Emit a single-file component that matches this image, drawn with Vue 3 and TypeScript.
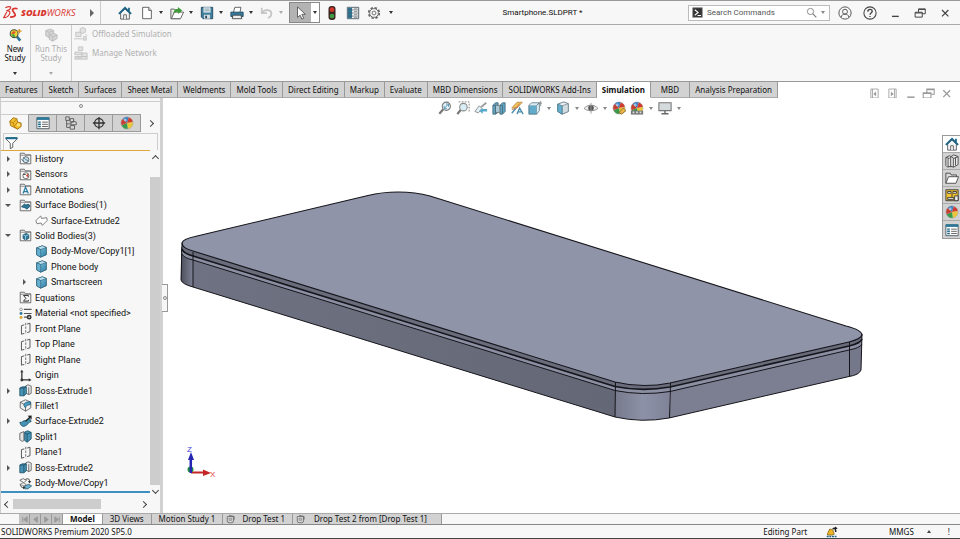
<script setup lang="ts">
import { ref } from 'vue'

interface Tool {
  icon: string
  label: string
  menu?: boolean
  off?: boolean
}

interface TreeNode {
  label: string
  icon: string
  level: number
  arrow?: 'closed' | 'open'
}

const fileTools: Tool[] = [
  { icon: 'page', label: 'New', menu: true },
  { icon: 'open', label: 'Open', menu: true },
  { icon: 'save', label: 'Save', menu: true },
  { icon: 'print', label: 'Print', menu: true },
  { icon: 'undo', label: 'Undo', menu: true, off: true },
]

const tabs = [
  'Features', 'Sketch', 'Surfaces', 'Sheet Metal', 'Weldments', 'Mold Tools', 'Direct Editing', 'Markup',
  'Evaluate', 'MBD Dimensions', 'SOLIDWORKS Add-Ins', 'Simulation', 'MBD', 'Analysis Preparation',
]
const activeTab = ref('Simulation')

const panelTabs: Tool[] = [
  { icon: 'part', label: 'Feature tree' },
  { icon: 'props', label: 'Properties' },
  { icon: 'config', label: 'Configurations' },
  { icon: 'target', label: 'Dimensions' },
  { icon: 'ball', label: 'Display' },
]
const activePanel = ref('part')

const tree: TreeNode[] = [
  { label: 'History', icon: 'f-history', level: 0, arrow: 'closed' },
  { label: 'Sensors', icon: 'f-sensor', level: 0, arrow: 'closed' },
  { label: 'Annotations', icon: 'f-note', level: 0, arrow: 'closed' },
  { label: 'Surface Bodies(1)', icon: 'f-surface', level: 0, arrow: 'open' },
  { label: 'Surface-Extrude2', icon: 'surface', level: 1 },
  { label: 'Solid Bodies(3)', icon: 'f-solid', level: 0, arrow: 'open' },
  { label: 'Body-Move/Copy1[1]', icon: 'cube', level: 1 },
  { label: 'Phone body', icon: 'cube', level: 1 },
  { label: 'Smartscreen', icon: 'cube', level: 1, arrow: 'closed' },
  { label: 'Equations', icon: 'f-sigma', level: 0 },
  { label: 'Material <not specified>', icon: 'material', level: 0 },
  { label: 'Front Plane', icon: 'plane', level: 0 },
  { label: 'Top Plane', icon: 'plane', level: 0 },
  { label: 'Right Plane', icon: 'plane', level: 0 },
  { label: 'Origin', icon: 'origin', level: 0 },
  { label: 'Boss-Extrude1', icon: 'boss', level: 0, arrow: 'closed' },
  { label: 'Fillet1', icon: 'fillet', level: 0 },
  { label: 'Surface-Extrude2', icon: 'sweep', level: 0, arrow: 'closed' },
  { label: 'Split1', icon: 'split', level: 0 },
  { label: 'Plane1', icon: 'plane', level: 0 },
  { label: 'Boss-Extrude2', icon: 'boss', level: 0, arrow: 'closed' },
  { label: 'Body-Move/Copy1', icon: 'move', level: 0 },
]

const viewTools: Tool[] = [
  { icon: 'zoomfit', label: 'Zoom to fit' },
  { icon: 'zoomarea', label: 'Zoom to area' },
  { icon: 'prev', label: 'Previous view' },
  { icon: 'section', label: 'Section view' },
  { icon: 'dynamic', label: 'Dynamic annotation views' },
  { icon: 'orient', label: 'View orientation', menu: true },
  { icon: 'style', label: 'Display style', menu: true },
  { icon: 'eye', label: 'Hide items', menu: true },
  { icon: 'appearance', label: 'Edit appearance' },
  { icon: 'scene', label: 'Apply scene', menu: true },
  { icon: 'monitor', label: 'View settings', menu: true },
]

const docTools: Tool[] = [
  { icon: 'dockleft', label: 'Dock left' },
  { icon: 'dockright', label: 'Dock right' },
  { icon: 'min', label: 'Minimize document' },
  { icon: 'restore', label: 'Restore document' },
  { icon: 'close', label: 'Close document' },
]

const taskTabs: Tool[] = [
  { icon: 'home', label: 'Resources' },
  { icon: 'library', label: 'Design library' },
  { icon: 'folder', label: 'File explorer' },
  { icon: 'palette', label: 'View palette' },
  { icon: 'ball', label: 'Appearances' },
  { icon: 'props', label: 'Custom properties' },
]

const studies = [
  { label: 'Model', test: false },
  { label: '3D Views', test: false },
  { label: 'Motion Study 1', test: false },
  { label: 'Drop Test 1', test: true },
  { label: 'Drop Test 2 from [Drop Test 1]', test: true },
]
const activeStudy = ref('Model')
const navs = ['first', 'previous', 'next', 'last']
const query = ref('')
const filter = ref('')
</script>

<template>
  <div class="app">
    <svg class="sprite" aria-hidden="true">
      <defs>
        <linearGradient id="g-blue" x1="0" y1="0" x2="1" y2="1">
          <stop offset="0" stop-color="#8fd0ea" /><stop offset="1" stop-color="#2b7ea6" />
        </linearGradient>
        <symbol id="home" viewBox="0 0 16 16"><path d="M3 8v7h10V8L8 3.500z" fill="#f1f3f4" stroke="#555" /><path d="M6.500 15v-5h3v5" fill="#fff" stroke="#555" /><path d="M11.500 2h2v4h-2z" fill="#1d6686" /><path d="M1 9l7-7 7 7" fill="none" stroke="#1d6686" stroke-width="2.200" /></symbol>
        <symbol id="page" viewBox="0 0 16 16"><path d="M3 1.500h7L13 5v9.500H3z" fill="#fff" stroke="#555" /><path d="M10 1.500V5h3" fill="#ddd" stroke="#555" /></symbol>
        <symbol id="open" viewBox="0 0 16 16"><path d="M1 3.500h4l1 1h5.500V7M1 3.500v11h10.500" fill="#e9e9e9" stroke="#555" /><path d="M1.500 14.500L5 7h10.500l-3.500 7.500z" fill="#fff" stroke="#555" /><path d="M4 9c0-4 2-5.500 5-5.500V1l5 4-5 4V6.500C7 6.500 5.500 7 4 9z" fill="#3d9a35" /></symbol>
        <symbol id="save" viewBox="0 0 16 16"><path d="M1.500 1.500h13v13h-11l-2-2z" fill="#3f7f9d" stroke="#20475b" /><path d="M4 1.500h8v6H4z" fill="#e8f0f4" /><path d="M5 3.500h6M5 5.500h6" stroke="#7c97a4" /><path d="M4.500 10h7v4.500h-7z" fill="#d7dde0" /><path d="M6 11h2v3H6z" fill="#20475b" /></symbol>
        <symbol id="print" viewBox="0 0 16 16"><path d="M4 7l1.500-5.500h7L11.500 7" fill="#fff" stroke="#555" /><path d="M1 7h14v5H1z" fill="#347b9b" stroke="#20475b" /><path d="M3.500 10.500h9l1 4h-11z" fill="#eee" stroke="#444" /></symbol>
        <symbol id="undo" viewBox="0 0 16 16"><path d="M2 2v6h6M2.500 7.500C6 3 13 4 13 8.500c0 3-2 4.500-4 5" fill="none" stroke="#c6c6c6" stroke-width="2" /></symbol>
        <symbol id="cursor" viewBox="0 0 16 16"><path d="M4 1v12l3-2.500 2 4.500 2-1-2-4.500h4z" fill="#fff" stroke="#555" /></symbol>
        <symbol id="traffic" viewBox="0 0 16 16"><rect x="4" y="0" width="8" height="16" rx="3.500" fill="#3b2420" /><circle cx="8" cy="4.200" r="2.700" fill="#d2372c" /><circle cx="8" cy="11.500" r="2.700" fill="#3f9c46" /></symbol>
        <symbol id="list" viewBox="0 0 16 16"><path d="M1.500 1.500h13v13h-13z" fill="#fff" stroke="#45545c" /><path d="M2 2h5v12H2z" fill="#2d7899" /><path d="M2 4.500h12M2 8h12M2 11.500h12" stroke="#45545c" stroke-width=".8" /><path d="M9 3.200h4M9 6.200h4M9 9.800h4M9 13h4" stroke="#888" /></symbol>
        <symbol id="gear" viewBox="0 0 16 16"><circle cx="8" cy="8" r="6" fill="none" stroke="#666" stroke-width="2" stroke-dasharray="2.800 1.900" /><circle cx="8" cy="8" r="5" fill="#f7f7f7" stroke="#666" /><circle cx="8" cy="8" r="2.200" fill="none" stroke="#666" /></symbol>
        <symbol id="terminal" viewBox="0 0 16 16"><path d="M1 1h14v14H1z" fill="#333" stroke="#888" /><path d="M4 4l5 4-5 4M8 12.500h5" stroke="#fff" stroke-width="1.500" fill="none" /></symbol>
        <symbol id="search" viewBox="0 0 16 16"><circle cx="6.500" cy="6.500" r="4.500" fill="none" stroke="#777" stroke-width="1.200" /><path d="M10 10l5 5" stroke="#777" stroke-width="1.600" /></symbol>
        <symbol id="user" viewBox="0 0 16 16"><g fill="none" stroke="#555" stroke-width="1.100"><circle cx="8" cy="8" r="7" /><circle cx="8" cy="6.500" r="2.800" /><path d="M3.500 13c.5-3 2.500-3.700 4.500-3.700s4 .7 4.500 3.700" /></g></symbol>
        <symbol id="help" viewBox="0 0 16 16"><g fill="none" stroke="#444" stroke-width="1.200"><circle cx="8" cy="8" r="7" /><path d="M5.500 6.500C5.500 3 10.500 3 10.500 6c0 2-2.500 2-2.500 4M8 11.300v1.400" stroke-width="1.500" /></g></symbol>
        <symbol id="min" viewBox="0 0 16 16"><path d="M4 12.500h9" stroke="currentColor" stroke-width="1.800" /></symbol>
        <symbol id="restore" viewBox="0 0 16 16"><path d="M6 7V2.500h9V9h-4M1.500 7H11v6.500H1.500zM1.500 8H11M6 3.300h9" fill="none" stroke="currentColor" stroke-width="1.300" /></symbol>
        <symbol id="close" viewBox="0 0 16 16"><path d="M4 4l8.500 8.500M12.500 4L4 12.500" stroke="currentColor" stroke-width="1.600" /></symbol>
        <symbol id="dockleft" viewBox="0 0 16 16"><path d="M3.500 2.500h9v11h-9zM5.500 2.500v11" fill="none" stroke="currentColor" stroke-width="1" /><path d="M10 5.500v6L6.500 8.500z" fill="currentColor" /></symbol>
        <symbol id="dockright" viewBox="0 0 16 16"><path d="M3.500 2.500h9v11h-9zM10.500 2.500v11" fill="none" stroke="currentColor" stroke-width="1" /><path d="M6 5.500v6l3.500-3z" fill="currentColor" /></symbol>
        <symbol id="newstudy" viewBox="0 0 16 16"><path d="M9.500 9l4.500 5.500" stroke="#2e7299" stroke-width="3" /><circle cx="7" cy="6.500" r="4.500" fill="#e8d838" stroke="#454a42" stroke-width="1.200" /><path d="M4 6.500a3 3 0 0 1 5-2L7 7z" fill="#e25a2a" /><path d="M4 7l3 0 1.500 3A3 3 0 0 1 4 7z" fill="#45a547" /><path d="M13 1v5M10.500 3.500h5" stroke="#d69023" stroke-width="1.500" /></symbol>
        <symbol id="run" viewBox="0 0 16 16"><g fill="#d4d4d4" stroke="#bcbcbc"><path d="M2 3l5-2 4 2v6l-5 2-4-2z" /><path d="M2 3l4 2v6M6 5l5-2" fill="none" /><path d="M6 8l5-2 4 2v4l-5 3-4-2z" /><path d="M6 8l4 2v5M10 10l5-2" fill="none" /></g></symbol>
        <symbol id="offload" viewBox="0 0 16 16"><g fill="#e2e2e2" stroke="#c2c2c2"><path d="M2 6h6v5H2zM7 2l3-1.500L13 2v4l-3 1.500L7 6z" /><path d="M0 13.500h10M11 11h3v4h-3z" /><path d="M13 8l2 2" /></g></symbol>
        <symbol id="network" viewBox="0 0 16 16"><g fill="#e2e2e2" stroke="#c2c2c2"><path d="M5 1h5v4H5zM1 7h8v3H1zM1 12h14v3H1zM9 8h6v4H9z" /><path d="M3 13.500h6" /></g></symbol>
        <symbol id="part" viewBox="0 0 16 16"><path d="M2 6l4-4 4 1 1 4 4 1v4l-4 3-8-4z" fill="#f2bd2f" stroke="#9b6f10" /><path d="M2 6l4 2 4-5M6 8l1 4 4-5M7 12l4 3" fill="none" stroke="#b9830f" /><circle cx="12" cy="10" r="1.800" fill="#ffe27b" /></symbol>
        <symbol id="props" viewBox="0 0 16 16"><path d="M1 2h14v12.500H1z" fill="#fff" stroke="#45545c" /><path d="M1 1.500h14v3H1z" fill="#2d7899" /><path d="M2.500 7h3M2.500 9.500h3M2.500 12h3" stroke="#1d6686" stroke-width="1.700" /><path d="M7 7h6.500M7 9.500h6.500M7 12h6.500" stroke="#555" /></symbol>
        <symbol id="config" viewBox="0 0 16 16"><path d="M3 2v11h4M3 4.500h4M3 9h5" fill="none" stroke="#555" /><path d="M2 1h4v4H2zM7 3h4v4H7zM8 7l3-1 3 1v3H8zM7 11h5v4H7z" fill="#d9d9d9" stroke="#555" /></symbol>
        <symbol id="target" viewBox="0 0 16 16"><circle cx="8" cy="8" r="5" fill="none" stroke="#333" stroke-width="1.500" /><path d="M8 1v14M1 8h14" stroke="#333" stroke-width="1.500" /></symbol>
        <symbol id="ball" viewBox="0 0 16 16"><circle cx="8" cy="8" r="6.800" fill="#eee" stroke="#777" stroke-width=".6" /><path d="M8 8L3 3.500A6.600 6.600 0 0 1 10 1.700z" fill="#3d7fc0" /><path d="M8 8l2-6.300A6.600 6.600 0 0 1 14.500 7z" fill="#d23a2e" /><path d="M8 8l6.500-1A6.600 6.600 0 0 1 9 14.600z" fill="#e9c63a" /><path d="M8 8l1 6.600A6.600 6.600 0 0 1 2 10.500z" fill="#3a9a4c" /><path d="M8 8l-6 2.500A6.600 6.600 0 0 1 3 3.500z" fill="#c54134" /><circle cx="6" cy="4.500" r="1.600" fill="#fff" opacity=".5" /></symbol>
        <symbol id="filter" viewBox="0 0 16 16"><path d="M1 2h14v1.500L9.500 9v5l-3 1.500V9L1 3.500z" fill="#fff" stroke="#444" /><path d="M1 1.500h14v2.500H1z" fill="#1d6f92" /></symbol>
        <symbol id="fold" viewBox="0 0 16 16"><path d="M1.500 14.500v-13h5l1.500 2h6.500v11z" fill="#f4f4f4" stroke="#555" /><path d="M1.500 4h13" stroke="#777" /></symbol>
        <symbol id="f-history" viewBox="0 0 16 16"><use href="#fold" /><circle cx="8.500" cy="9.500" r="3.700" fill="#cfe2ea" stroke="#45545c" /><path d="M6 7l2.500 2.500 2.500 1M3 9l2 2" stroke="#2d6d8c" fill="none" /></symbol>
        <symbol id="f-sensor" viewBox="0 0 16 16"><use href="#fold" /><circle cx="8.500" cy="9.500" r="3.700" fill="#fff" stroke="#555" /><path d="M8.500 9.500l2.800-2.800v5z" fill="#cf3d2d" /><path d="M5 8h3.500" stroke="#333" /></symbol>
        <symbol id="f-note" viewBox="0 0 16 16"><use href="#fold" /><path d="M5 13l3-8 3.500 8M6 10.500h4.500" fill="none" stroke="#267ca2" stroke-width="1.500" /></symbol>
        <symbol id="f-surface" viewBox="0 0 16 16"><use href="#fold" /><path d="M3 9.500L7 6l1 1.500 4-1 1.500 2.500-4 3.500-1.500-1.500z" fill="#2d7899" stroke="#1c4f68" /></symbol>
        <symbol id="f-solid" viewBox="0 0 16 16"><use href="#fold" /><path d="M5 7l4-1.500L12 7v4.500l-4 2-3-2z" fill="#2d7899" stroke="#1c4f68" /><path d="M5 7l3 1.500L12 7M8 8.500v5" stroke="#a2d3e8" fill="none" /></symbol>
        <symbol id="f-sigma" viewBox="0 0 16 16"><use href="#fold" /><path d="M11.500 7V5.500H5.500L8.500 9l-3 3.500h6V11" fill="none" stroke="#333" stroke-width="1.200" /></symbol>
        <symbol id="surface" viewBox="0 0 16 16"><path d="M1 8l6-5.500 1 3 6.500-1L15 8l-6 6-1.500-3-5 1z" fill="#fff" stroke="#666" /></symbol>
        <symbol id="cube" viewBox="0 0 16 16"><path d="M2 3.500L9 1l5 2v9l-7 3-5-3z" fill="url(#g-blue)" stroke="#2b5a70" /><path d="M2 3.500l5 2L14 3 9 1z" fill="#b9e2f1" stroke="#2b5a70" stroke-width=".7" /><path d="M2 3.500l5 2V15l-5-3z" fill="#65afd0" stroke="#2b5a70" stroke-width=".7" /></symbol>
        <symbol id="style" viewBox="0 0 16 16"><path d="M2 3.500L9 1l5 2v9l-7 3-5-3z" fill="#e9eef0" stroke="#5f7680" /><path d="M7 5.500L14 3v9l-7 3z" fill="#d3dce0" stroke="#5f7680" stroke-width=".7" /><path d="M2 3.500l5 2V15l-5-3z" fill="#65afd0" stroke="#3f6f86" stroke-width=".7" /></symbol>
        <symbol id="material" viewBox="0 0 16 16"><circle cx="2.500" cy="3" r="1.600" fill="#fff" stroke="#888" /><circle cx="2.500" cy="8" r="1.800" fill="#2d7899" /><circle cx="2.500" cy="13" r="1.800" fill="#d9a52c" /><path d="M6 3h9.500M6 8h9.500M6 12.500h4" stroke="#555" stroke-width="1.500" /><circle cx="12.500" cy="12.500" r="2" fill="none" stroke="#333" stroke-width="2" /></symbol>
        <symbol id="plane" viewBox="0 0 16 16"><path d="M6.500 3.500L3 4.500V15l3.500-1M10 2.500L13.500 1.500v10.500L10 13" fill="none" stroke="#555" stroke-width="1.200" /><path d="M8.300 1v14" stroke="#555" stroke-dasharray="3 1.500" /></symbol>
        <symbol id="origin" viewBox="0 0 16 16"><path d="M3.500 3v10.500H13" fill="none" stroke="#333" stroke-width="1.600" /><path d="M1.500 4l2-3 2 3zM12 11.500l3.500 2-3.500 2z" fill="#333" /><circle cx="3.500" cy="13.500" r="1.800" fill="#333" /></symbol>
        <symbol id="boss" viewBox="0 0 16 16"><path d="M8 2.500l3-1.500 4 1.500v9L12 13l-4-2z" fill="#eee" stroke="#555" /><path d="M12 4v9" stroke="#555" /><path d="M1 5l3-1.500h5V12l-3 2.500H1z" fill="#4793b5" stroke="#1c4f68" /><path d="M1 5h5v9.500M6 5l3-1.500" fill="none" stroke="#1c4f68" /></symbol>
        <symbol id="fillet" viewBox="0 0 16 16"><path d="M1.500 4L8 1l6.500 3v7L8 15l-6.500-4z" fill="#f0f0f0" stroke="#555" /><path d="M6 8c0-3 2-4.500 8-4.500V7c-3 0-6 1-6 4z" fill="#4ea0c4" stroke="#1c5a78" /><path d="M1.500 4L6 6.500M8 11v4" fill="none" stroke="#555" /></symbol>
        <symbol id="sweep" viewBox="0 0 16 16"><path d="M1 9c3 1 4-3 7-2l5-3 2 4c-3 0-4 5-9 6-3 0-4-2-5-5z" fill="#4793b5" stroke="#1c4f68" /><path d="M8 8l6-6" stroke="#222" stroke-width="1.500" /><path d="M15.500.500v5L10.500 1z" fill="#222" /></symbol>
        <symbol id="split" viewBox="0 0 16 16"><path d="M1 4l5-2v11l-2 1-3-2z" fill="#e4e4e4" stroke="#555" /><path d="M7 2.500L11 1l4 2v8l-5 4-3-2z" fill="#4793b5" stroke="#1c4f68" /><path d="M10 5v10M7 3.500l3 1.500 5-2" fill="none" stroke="#1c4f68" /></symbol>
        <symbol id="move" viewBox="0 0 16 16"><path d="M1 4l4-2 4 2-3 3z" fill="#fff" stroke="#555" /><path d="M7 11l5-2 3.500 2L11 14.500H7z" fill="#6db4d3" stroke="#2b5a70" /><path d="M8 3c4-2 5 0 5 3M2 9c0 4 2 4 4 4" fill="none" stroke="#333" stroke-width="1.200" /><path d="M11 5h4l-2 3zM5 11v4l3-2z" fill="#333" /><path d="M1 9l4-2 4 2-3 2z" fill="#eee" stroke="#555" stroke-width=".7" /></symbol>
        <symbol id="zoomfit" viewBox="0 0 16 16"><path d="M6 9.500L1.500 14.500" stroke="#777" stroke-width="2.500" /><circle cx="9.500" cy="6" r="4.700" fill="#e4f3f9" stroke="#777" stroke-width="1.200" /><path d="M7.500 8l4-4M9 3.500h3v3M7 5.500v3h3" fill="none" stroke="#4b8cab" /></symbol>
        <symbol id="zoomarea" viewBox="0 0 16 16"><path d="M3 1h12v11" fill="none" stroke="#777" stroke-dasharray="2 1.500" /><path d="M5.500 10L1.500 15" stroke="#777" stroke-width="2.500" /><circle cx="8.500" cy="7" r="4.300" fill="#d9eef6" stroke="#888" stroke-width="1.200" /></symbol>
        <symbol id="prev" viewBox="0 0 16 16"><path d="M8 7l6-5" stroke="#999" stroke-width="2" /><path d="M6 5.500l3 3-4 5-4-1.500z" fill="#e4f3f9" stroke="#888" /><path d="M15 9v3h-5v2.500L6 11.500 10 8v1z" fill="#5aa9cc" /></symbol>
        <symbol id="section" viewBox="0 0 16 16"><path d="M1 5l3-3h3v11l-3 2H1zM9 5l3-3h3v10l-3 3H9z" fill="#5ba3c2" stroke="#4f6e7c" /><path d="M4 5h5v8H4z" fill="#a9c9d7" stroke="#777" /><path d="M1 5h3v10M9 5h3v10" fill="none" stroke="#4f6e7c" /></symbol>
        <symbol id="dynamic" viewBox="0 0 16 16"><path d="M2 8l6-6.500h6L8 8z" fill="#f2c25a" stroke="#b98c45" /><path d="M2 14l5-6M8 15l3-7 4 7M9 12.500h5" fill="none" stroke="#4b8cab" stroke-width="1.500" /><path d="M2 10l5-2 4-5" stroke="#c8704a" fill="none" /></symbol>
        <symbol id="orient" viewBox="0 0 16 16"><path d="M1 5h9v10H1z" fill="#63abca" stroke="#4a7386" /><path d="M1 5l3-3h9l-3 3M10 5l3-3v9l-3 4" fill="#dceef5" stroke="#6b828d" /><path d="M14.500 0v6M12 2.500h4" stroke="#888" /></symbol>
        <symbol id="eye" viewBox="0 0 16 16"><path d="M0 8.500C4 3.500 12 3.500 16 8.500 12 12 4 12 0 8.500z" fill="#eee" stroke="#888" /><circle cx="8" cy="8" r="3.200" fill="#555" /><path d="M8 2v12.500" stroke="#999" /></symbol>
        <symbol id="appearance" viewBox="0 0 16 16"><use href="#ball" /><path d="M8 13l5-5 3 3-5 4z" fill="#e8b64a" stroke="#8b6522" /></symbol>
        <symbol id="scene" viewBox="0 0 16 16"><use href="#ball" /><path d="M1 11h14v4.500H1z" fill="#777" /><path d="M3 12h2v2H3zM7 12h2v2H7zM11 12h2v2h-2z" fill="#ddd" /></symbol>
        <symbol id="monitor" viewBox="0 0 16 16"><path d="M1 2h14v9H1z" fill="#d5dadd" stroke="#777" stroke-width="1.200" /><path d="M8 11v3M4 14.500h8" stroke="#666" stroke-width="1.600" /></symbol>
        <symbol id="library" viewBox="0 0 16 16"><path d="M1 4l4-2 2 1 3-2 5 2v9l-5 3-4-1-3 1-2-2z" fill="#e7e7e7" stroke="#444" /><path d="M3.500 5v10M6.500 4v11M9.500 5v10M12 4v9M1 4l4 1 2-2 3 2 5-2" fill="none" stroke="#444" /></symbol>
        <symbol id="folder" viewBox="0 0 16 16"><path d="M1 14V2.500h5l1 2h6V7" fill="#ddd" stroke="#444" /><path d="M1 14l3-7.500h11.500L12.500 14z" fill="#fff" stroke="#444" /></symbol>
        <symbol id="palette" viewBox="0 0 16 16"><path d="M1 2h14v12.500H1z" fill="#f2c430" stroke="#333" /><path d="M3 4h4v2H3zM9 4h4v2H9zM8 6v5M3 11h7v2H3z" fill="#fff" stroke="#333" /><path d="M11 9h4v5.500h-4z" fill="#eee" stroke="#333" /></symbol>
        <symbol id="stopwatch" viewBox="0 0 16 16"><path d="M2 4h10v7a3 3 0 0 1-3 3H5a3 3 0 0 1-3-3zM5 2l8 2v5" fill="none" stroke="#666" stroke-width="1.300" /><path d="M5 7h4v3H5z" fill="none" stroke="#777" /></symbol>
        <symbol id="rebuild" viewBox="0 0 16 16"><path d="M2 10l3-6 4 1 2 6-3 1H2z" fill="#edb525" stroke="#815e10" /><path d="M9 4c3-3 4 1 4 4" fill="none" stroke="#222" stroke-width="2" /><path d="M10 4l3-3.500L15.500 4z" fill="#222" /><path d="M1 14h13" stroke="#1d6686" stroke-width="2" stroke-dasharray="2.500 1" /></symbol>
      </defs>
    </svg>

    <header class="titlebar">
      <div class="brand">
        <svg class="mark" viewBox="0 0 16 16" aria-hidden="true"><g fill="none" stroke="#d9352f"><path d="M2.500 3c4-2 6.500-1.500 5.500.5C7.500 4.800 5.500 5.800 3.500 6.300M4.500 6.500C7 6 8 7.500 6.800 9.800 5.500 12 3 13.500.8 13.500L4 7.500" stroke-width="1.200" /><path d="M15.500 4c-4-1-6 .3-5 2.300l2.300 3.400c1 2-1 3.300-5.300 3.300" stroke-width="1.900" /></g></svg>
        <span class="word"><b>SOLID</b>WORKS</span>
      </div>
      <button class="expand" aria-label="Show menu"><i class="tri-right"></i></button>
      <nav class="quick" aria-label="Quick access">
        <button class="tool home" aria-label="Home"><svg><use href="#home" /></svg></button>
        <div v-for="t in fileTools" :key="t.icon" class="split">
          <button class="tool" :aria-label="t.label" :disabled="t.off"><svg><use :href="'#' + t.icon" /></svg></button>
          <button class="caret" :class="{ off: t.off }" :aria-label="t.label + ' options'" :disabled="t.off"></button>
        </div>
        <div class="select">
          <button class="arrow" aria-label="Select"><svg><use href="#cursor" /></svg></button>
          <button class="caret" aria-label="Select options"></button>
        </div>
        <div class="extras">
          <button class="tool" aria-label="Rebuild"><svg><use href="#traffic" /></svg></button>
          <button class="tool" aria-label="File properties"><svg><use href="#list" /></svg></button>
          <button class="tool" aria-label="Options"><svg><use href="#gear" /></svg></button>
        </div>
        <button class="caret" aria-label="More options"></button>
      </nav>
      <h1 class="doc">Smartphone.SLDPRT *</h1>
      <label class="search">
        <svg><use href="#terminal" /></svg>
        <input v-model="query" type="text" placeholder="Search Commands" aria-label="Search Commands" />
        <svg><use href="#search" /></svg>
        <i class="caret faint"></i>
      </label>
      <div class="window">
        <button aria-label="Account"><svg><use href="#user" /></svg></button>
        <button aria-label="Help"><svg><use href="#help" /></svg></button>
        <button aria-label="Minimize"><svg class="small"><use href="#min" /></svg></button>
        <button aria-label="Restore"><svg class="small"><use href="#restore" /></svg></button>
        <button aria-label="Close"><svg class="small"><use href="#close" /></svg></button>
      </div>
    </header>

    <section class="ribbon" aria-label="Simulation commands">
      <button class="big new"><svg><use href="#newstudy" /></svg><span>New Study</span><i class="caret"></i></button>
      <button class="big run" disabled><svg><use href="#run" /></svg><span>Run This Study</span><i class="caret off"></i></button>
      <div class="rows">
        <button disabled><svg><use href="#offload" /></svg>Offloaded Simulation</button>
        <button disabled><svg><use href="#network" /></svg>Manage Network</button>
      </div>
    </section>

    <div class="tabrow">
      <nav class="tabs" aria-label="Command manager">
        <button v-for="t in tabs" :key="t" :class="{ on: t === activeTab, wide: t === 'MBD' }" @click="activeTab = t">{{ t }}</button>
      </nav>
      <div class="docctl">
        <button v-for="d in docTools" :key="d.icon" :aria-label="d.label"><svg><use :href="'#' + d.icon" /></svg></button>
      </div>
    </div>

    <main class="work">
      <aside class="panel">
        <div class="grip"><i></i></div>
        <nav class="ptabs" aria-label="Manager tabs">
          <button v-for="p in panelTabs" :key="p.icon" :class="{ on: p.icon === activePanel }" :aria-label="p.label" @click="activePanel = p.icon">
            <svg><use :href="'#' + p.icon" /></svg>
          </button>
          <button class="more" aria-label="More tabs"><i class="chev right"></i></button>
        </nav>
        <label class="filter"><svg><use href="#filter" /></svg><input v-model="filter" type="text" aria-label="Filter tree" /></label>
        <div class="treebox">
          <ul class="tree">
            <li v-for="(n, i) in tree" :key="i" :class="{ child: n.level === 1 }">
              <span class="twist"><i v-if="n.arrow" :class="n.arrow"></i></span>
              <svg><use :href="'#' + n.icon" /></svg>
              <span>{{ n.label }}</span>
            </li>
          </ul>
          <div class="vbar"><i class="chev up"></i><div class="thumb"></div><i class="chev down"></i></div>
        </div>
        <div class="hbar"><i class="chev left"></i><div class="thumb"></div><i class="chev right"></i></div>
      </aside>

      <section class="view" aria-label="Graphics area">
        <svg class="model" viewBox="163 98 797 415" preserveAspectRatio="xMidYMid meet" role="img" aria-label="Smartphone solid model">
          <defs>
            <linearGradient id="c-left"><stop offset="0" stop-color="#4c4f5c" /><stop offset="1" stop-color="#7d8194" /></linearGradient>
            <linearGradient id="c-front"><stop offset="0" stop-color="#777a8c" /><stop offset=".5" stop-color="#8d91a7" /><stop offset="1" stop-color="#808398" /></linearGradient>
            <linearGradient id="s-left"><stop offset="0" stop-color="#6f7282" /><stop offset="1" stop-color="#646775" /></linearGradient>
          </defs>
          <path d="M181 247V280Q182 284 193 287V252z" fill="url(#c-left)" />
          <path d="M193 252V287L615 417V382z" fill="url(#s-left)" />
          <path d="M615 382V417Q642 423 669 418L670 383z" fill="url(#c-front)" />
          <path d="M670 383L669 418L849 376.500V342z" fill="#7c7f92" />
          <path d="M849 342V376.500Q859 375 861 370L862 334z" fill="#75788b" />
          <path d="M182 249Q183 253 193 256L615 386.500Q642 392 670 387L849 346Q861 343 862 339V344Q860 348 849 350L670 391.500Q642 396 615 390.500L193 260Q184 258 182 254z" fill="#8b8fa2" />
          <path d="M182 243L182 249Q183 253 193 256L615 386.500Q642 392 670 387L849 346Q861 343 862 339V334z" fill="#696c7b" />
          <path d="M193 251Q182 248 182 243Q183 239 195 236.500L368 195.500C386 191 410 190.500 430 196L846 326Q862 330 862 335Q861 339 849 342L670 383Q642 388.500 615 382z" fill="#9094a9" stroke="#15151b" stroke-width="1.100" />
          <g class="edge">
            <path d="M182 249Q183 253 193 256L615 386.500Q642 392 670 387L849 346Q861 343 862 339" stroke-width="1.600" />
            <path d="M182 254Q184 258 193 260L615 390.500Q642 396 670 391.500L849 350Q860 348 862 344" />
            <path d="M182 243L181 280Q182 284 193 287L615 417Q642 423 669 418L849 376.500Q859 375 861 370L862 334" />
            <path d="M193 252V287M615.500 382L615 417M670.500 383L669.500 418M849.500 342V376.500" />
          </g>
          <g class="axis">
            <path d="M191 472.500h14" stroke="#c42525" stroke-width="2" /><path d="M203 469.500l8 3.500-8 3z" fill="#c42525" />
            <circle cx="190.500" cy="469.500" r="3" fill="#1f8f3c" />
            <path d="M190.800 473v-16" stroke="#2525b5" stroke-width="2.500" /><path d="M188 460l3-8 3 8z" fill="#2525b5" />
            <text x="187" y="452" fill="#3c3cd0">Z</text><text x="210" y="477" fill="#e04545">X</text>
          </g>
        </svg>
        <nav class="headsup" aria-label="View toolbar">
          <template v-for="v in viewTools" :key="v.icon">
            <button class="tool" :aria-label="v.label"><svg><use :href="'#' + v.icon" /></svg></button>
            <button v-if="v.menu" class="caret faint" :aria-label="v.label + ' options'"></button>
          </template>
        </nav>
        <nav class="task" aria-label="Task pane">
          <button v-for="(t, i) in taskTabs" :key="t.icon" :class="{ on: i === 0 }" :aria-label="t.label"><svg><use :href="'#' + t.icon" /></svg></button>
        </nav>
        <button class="handle" aria-label="Collapse panel"><i></i></button>
      </section>
    </main>

    <nav class="studies" aria-label="Studies">
      <div class="navs">
        <button v-for="n in navs" :key="n" :aria-label="n" disabled>
          <svg viewBox="0 0 10 10">
            <path v-if="n === 'first'" d="M3 2v6M8 2v6L4 5z" /><path v-if="n === 'previous'" d="M7 2v6L3 5z" />
            <path v-if="n === 'next'" d="M3 2v6l4-3z" /><path v-if="n === 'last'" d="M7 2v6M2 2v6l4-3z" />
          </svg>
        </button>
      </div>
      <button v-for="s in studies" :key="s.label" class="study" :class="{ on: s.label === activeStudy, test: s.test }" @click="activeStudy = s.label">
        <svg v-if="s.test"><use href="#stopwatch" /></svg>{{ s.label }}
      </button>
    </nav>

    <footer class="status">
      <span class="version">SOLIDWORKS Premium 2020 SP5.0</span>
      <span>Editing Part</span>
      <svg><use href="#rebuild" /></svg>
      <button class="units">MMGS<i></i></button>
      <span class="bang">!</span>
    </footer>
  </div>
</template>

<style>
html,
body,
#app {
  height: 100%;
  margin: 0;
}
</style>

<style scoped>
.app {
  display: flex;
  flex-direction: column;
  box-sizing: border-box;
  height: 100%;
  overflow: hidden;
  border-top: 1px solid #999;
  border-bottom: 1px solid #444;
  background: #f7f7f7;
  color: #111;
  font: 8px/12px "Noto Sans", "Open Sans", sans-serif;
}
.app * {
  box-sizing: border-box;
}
.sprite {
  position: absolute;
  width: 0;
  height: 0;
}
button {
  display: flex;
  align-items: center;
  justify-content: center;
  margin: 0;
  padding: 0;
  border: 0;
  background: none;
  color: inherit;
  font: inherit;
  white-space: nowrap;
}
input {
  min-width: 0;
  padding: 0;
  border: 0;
  outline: 0;
  background: none;
  font: inherit;
}
svg {
  flex: none;
  width: 14px;
  height: 14px;
}
.caret {
  display: flex;
  align-items: center;
  justify-content: center;
  flex: none;
  width: 12px;
}
.caret::before {
  content: "";
  border: 2px solid transparent;
  border-top: 3px solid #333;
  border-bottom: 0;
}
.caret.off::before {
  border-top-color: #aaa;
}
.caret.faint::before {
  border-top-color: #888;
}
.chev {
  flex: none;
  width: 5px;
  height: 5px;
  border: solid #444;
  border-width: 1px 1px 0 0;
}
.chev.right { transform: rotate(45deg); }
.chev.left { transform: rotate(-135deg); }
.chev.up { transform: rotate(-45deg); }
.chev.down { transform: rotate(135deg); }

.titlebar {
  display: flex;
  flex: none;
  align-items: center;
  height: 24px;
  border-bottom: 1px solid #aaa;
}
.brand {
  display: flex;
  align-items: center;
  gap: 3px;
  width: 84px;
  padding-left: 3px;
  color: #d9352f;
}
.mark {
  width: 15px;
  height: 15px;
}
.word {
  font: italic 9px/12px "Open Sans", sans-serif;
}
.word b {
  font-weight: 800;
}
.expand {
  align-self: stretch;
  width: 17px;
  border-right: 1px solid #ccc;
}
.tri-right {
  border: 4px solid transparent;
  border-left: 4px solid #666;
  border-right: 0;
}
.quick {
  display: flex;
  align-items: center;
  gap: 2px;
  padding-left: 16px;
}
.tool {
  width: 16px;
  height: 16px;
}
.home {
  margin-right: 4px;
}
.split,
.extras {
  display: flex;
}
.select {
  display: flex;
  height: 21px;
  border: 1px solid #888;
  background: #fff;
}
.select .caret {
  width: 8px;
}
.arrow {
  width: 21px;
  background: #b3b3b3;
}
.extras {
  gap: 5px;
  padding: 0 1px 0 2px;
}
.doc {
  flex: 1;
  margin: 0;
  font: 8px/12px Roboto, "Noto Sans", sans-serif;
  text-align: center;
}
.search {
  display: flex;
  align-items: center;
  width: 142px;
  height: 16px;
  padding-left: 3px;
  border: 1px solid #bbb;
  background: #fff;
  font: 8px/12px Roboto, "Noto Sans", sans-serif;
}
.search svg {
  width: 11px;
  height: 11px;
}
.search input {
  flex: 1;
  padding-left: 4px;
}
.search input::placeholder {
  color: #555;
  opacity: 1;
}
.window {
  display: flex;
  gap: 9px;
  padding: 0 7px;
  color: #444;
}
.window button {
  width: 16px;
}
.window .small {
  width: 12px;
  height: 12px;
}

.ribbon {
  display: flex;
  flex: none;
  height: 56px;
}
.big {
  flex-direction: column;
  justify-content: flex-start;
  border-right: 1px solid #ccc;
  line-height: 9px;
  white-space: normal;
}
.big span {
  flex: none;
  height: 28px;
}
.big.new {
  width: 31px;
  padding: 3px 3px 0;
}
.big.run {
  width: 41px;
  padding: 3px 1px 0;
}
.big svg {
  margin-bottom: 2px;
}
.ribbon button:disabled {
  color: #b0b0b0;
}
.rows {
  display: flex;
  flex-direction: column;
  align-items: flex-start;
  gap: 5px;
  padding: 2px;
}
.rows button {
  gap: 4px;
}

.tabrow {
  display: flex;
  flex: none;
  justify-content: space-between;
  height: 17px;
  border-top: 1px solid #999;
  background: #fff;
}
.tabs {
  display: flex;
}
.tabs button {
  padding: 0 5px;
  border-right: 1px solid #999;
  border-bottom: 1px solid #aaa;
  background: #d2d2d2;
}
.tabs .wide {
  padding: 0 10px;
}
.tabs .on {
  border-bottom-color: #fff;
  background: #fff;
  font-weight: 700;
}
.docctl {
  display: flex;
  gap: 5px;
  padding: 5px 7px 0 0;
  color: #999;
}
.docctl button,
.docctl svg {
  width: 13px;
  height: 13px;
}

.work {
  display: flex;
  flex: 1;
  min-height: 0;
}
.panel {
  display: flex;
  flex: none;
  flex-direction: column;
  width: 163px;
  border-left: 1px solid #ccc;
  border-right: 3px solid #d2d2d2;
}
.grip {
  display: flex;
  flex: none;
  align-items: center;
  justify-content: center;
  height: 13px;
  margin-top: 3px;
  border-top: 1px solid #ccc;
  padding-bottom: 4px;
}
.grip i,
.handle i {
  width: 4px;
  height: 4px;
  border: 1px solid #888;
  border-radius: 50%;
}
.ptabs {
  display: flex;
  flex: none;
  height: 18px;
}
.ptabs button {
  width: 28px;
  border: 1px solid #999;
  border-left: 0;
  background: #d2d2d2;
}
.ptabs .on {
  border-color: #ccc #999 #f7f7f7;
  background: #f7f7f7;
}
.ptabs .more {
  flex: 1;
  border: 0;
  background: none;
}
.filter {
  display: flex;
  flex: none;
  align-items: center;
  height: 17px;
  margin: 1px 2px 0;
  padding-left: 1px;
  border: 1px solid #ccc;
  border-bottom: 0;
}
.filter svg {
  width: 13px;
  height: 13px;
}
.filter input {
  flex: 1;
}
.treebox {
  display: flex;
  flex: 1;
  min-height: 0;
}
.tree {
  display: grid;
  flex: 1;
  grid-auto-rows: 1fr;
  min-width: 0;
  margin: 0 0 5px;
  padding: 0;
  border-top: 1px solid #e0a83c;
  border-bottom: 2px solid #3f8fc0;
  font: 9px/12px Roboto, "Noto Sans", sans-serif;
  list-style: none;
}
.tree li {
  display: flex;
  align-items: center;
  min-height: 0;
  white-space: nowrap;
}
.tree .child {
  padding-left: 16px;
}
.tree svg {
  width: 13px;
  height: 13px;
  margin-right: 3px;
}
.twist {
  display: flex;
  justify-content: center;
  width: 14px;
  margin-right: 4px;
}
.closed {
  border: 3px solid transparent;
  border-left-color: #555;
  border-right: 0;
}
.open {
  border: 3px solid transparent;
  border-top-color: #555;
  border-bottom: 0;
}
.vbar {
  display: flex;
  flex: none;
  flex-direction: column;
  align-items: center;
  width: 10px;
  padding: 6px 0 5px;
}
.vbar .thumb {
  flex: 1;
  width: 100%;
  margin: 16px 0 3px;
  background: #cdcdcd;
}
.hbar {
  display: flex;
  flex: none;
  align-items: center;
  height: 12px;
  margin-bottom: 3px;
  padding: 0 14px 0 4px;
}
.hbar .thumb {
  width: 88px;
  height: 10px;
  margin: 0 auto 0 3px;
  background: #cdcdcd;
}

.view {
  position: relative;
  flex: 1;
  min-width: 0;
  background: #fff;
}
.model {
  display: block;
  width: 100%;
  height: 100%;
}
.edge {
  fill: none;
  stroke: #15151b;
}
.axis text {
  font: 8px "Liberation Sans", sans-serif;
}
.headsup {
  position: absolute;
  top: 2px;
  right: 0;
  left: 0;
  display: flex;
  gap: 2px;
  justify-content: center;
  padding-right: 4px;
}
.headsup .caret {
  width: 8px;
}
.task {
  position: absolute;
  top: 37px;
  right: 0;
  width: 18px;
  border: 1px solid #999;
  border-right: 0;
}
.task button {
  width: 100%;
  height: 17px;
  border-bottom: 1px solid #aaa;
  background: #d2d2d2;
}
.task .on {
  background: #fff;
}
.task button:last-child {
  border-bottom: 0;
}
.handle {
  position: absolute;
  top: 186px;
  left: -1px;
  width: 6px;
  height: 28px;
  border: 1px solid #999;
  border-left: 0;
  background: #f7f7f7;
}

.studies {
  display: flex;
  flex: none;
  height: 12px;
  border-top: 1px solid #aaa;
  border-bottom: 1px solid #888;
  line-height: 10px;
}
.navs {
  display: flex;
  padding-left: 19px;
}
.navs button {
  width: 11px;
  border-right: 1px solid #999;
  background: #c2c2c2;
}
.navs svg {
  width: 9px;
  height: 9px;
  fill: #999;
  stroke: #999;
}
.study {
  padding: 0 7px;
  border-right: 1px solid #999;
  background: #d2d2d2;
}
.study.on {
  background: #fff;
  font-weight: 700;
}
.study.test {
  gap: 6px;
  padding-left: 3px;
}
.study.test:last-child {
  gap: 8px;
  padding-right: 14px;
}
.study svg {
  width: 10px;
  height: 10px;
}
.status {
  display: flex;
  flex: none;
  align-items: center;
  height: 13px;
  padding: 0 10px 0 1px;
}
.version {
  flex: 1;
}
.status svg {
  width: 12px;
  height: 12px;
  margin: 0 51px 0 19px;
}
.units {
  gap: 13px;
}
.units i {
  border: 2px solid transparent;
  border-top: 0;
  border-bottom: 3px solid #444;
}
.bang {
  margin-left: 17px;
}
</style>
